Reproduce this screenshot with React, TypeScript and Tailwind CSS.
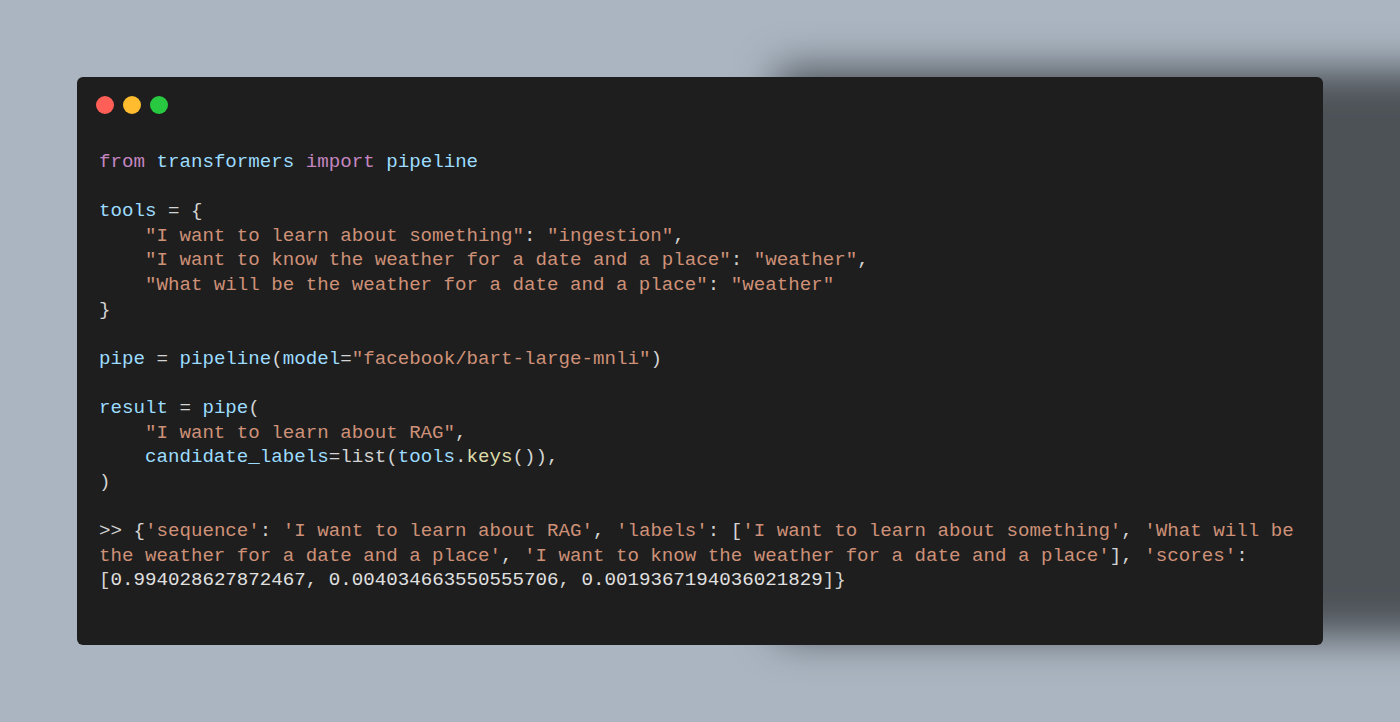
import React from "react";

const K = ({ children }: { children: React.ReactNode }) => <span className="text-[#c586c0]">{children}</span>;
const V = ({ children }: { children: React.ReactNode }) => <span className="text-[#9cdcfe]">{children}</span>;
const S = ({ children }: { children: React.ReactNode }) => <span className="text-[#ce9178]">{children}</span>;
const F = ({ children }: { children: React.ReactNode }) => <span className="text-[#dcdcaa]">{children}</span>;
const N = ({ children }: { children: React.ReactNode }) => <span className="text-[#e0e0e0]">{children}</span>;

export default function App() {
  return (
    <div className="w-[1400px] h-[722px] bg-[#aab5c1] overflow-hidden pt-[77px] pl-[77px]">
      <div className="w-[1246px] h-[568px] bg-[#1e1e1e] rounded-[6px] shadow-[700px_-8px_40px_rgba(0,0,0,0.55)] pt-[19px] pl-[22px]">
        <div className="flex gap-[9px] ml-[-3px]">
          <div className="w-[18px] h-[18px] rounded-full bg-[#ff5f57]" />
          <div className="w-[18px] h-[18px] rounded-full bg-[#febc2e]" />
          <div className="w-[18px] h-[18px] rounded-full bg-[#28c840]" />
        </div>
        <pre className="mt-[36px] font-['Liberation_Mono','Courier_New',monospace] text-[19.15px] leading-[24.6px] text-[#d4d4d4] whitespace-pre">
{<>
<K>from</K> <V>transformers</V> <K>import</K> <V>pipeline</V>{"\n"}
{"\n"}
<V>tools</V> = {"{"}{"\n"}
{"    "}<S>"I want to learn about something"</S>: <S>"ingestion"</S>,{"\n"}
{"    "}<S>"I want to know the weather for a date and a place"</S>: <S>"weather"</S>,{"\n"}
{"    "}<S>"What will be the weather for a date and a place"</S>: <S>"weather"</S>{"\n"}
{"}"}{"\n"}
{"\n"}
<V>pipe</V> = <V>pipeline</V>(<V>model</V>=<S>"facebook/bart-large-mnli"</S>){"\n"}
{"\n"}
<V>result</V> = <V>pipe</V>({"\n"}
{"    "}<S>"I want to learn about RAG"</S>,{"\n"}
{"    "}<V>candidate_labels</V>=list(<V>tools</V>.<F>keys</F>()),{"\n"}
){"\n"}
{"\n"}
&gt;&gt; {"{"}<S>'sequence'</S>: <S>'I want to learn about RAG'</S>, <S>'labels'</S>: [<S>'I want to learn about something'</S>, <S>'What will be</S>{"\n"}
<S>the weather for a date and a place'</S>, <S>'I want to know the weather for a date and a place'</S>], <S>'scores'</S>:{"\n"}
[<N>0.994028627872467</N>, <N>0.004034663550555706</N>, <N>0.0019367194036021829</N>]{"}"}
</>}
        </pre>
      </div>
    </div>
  );
}
